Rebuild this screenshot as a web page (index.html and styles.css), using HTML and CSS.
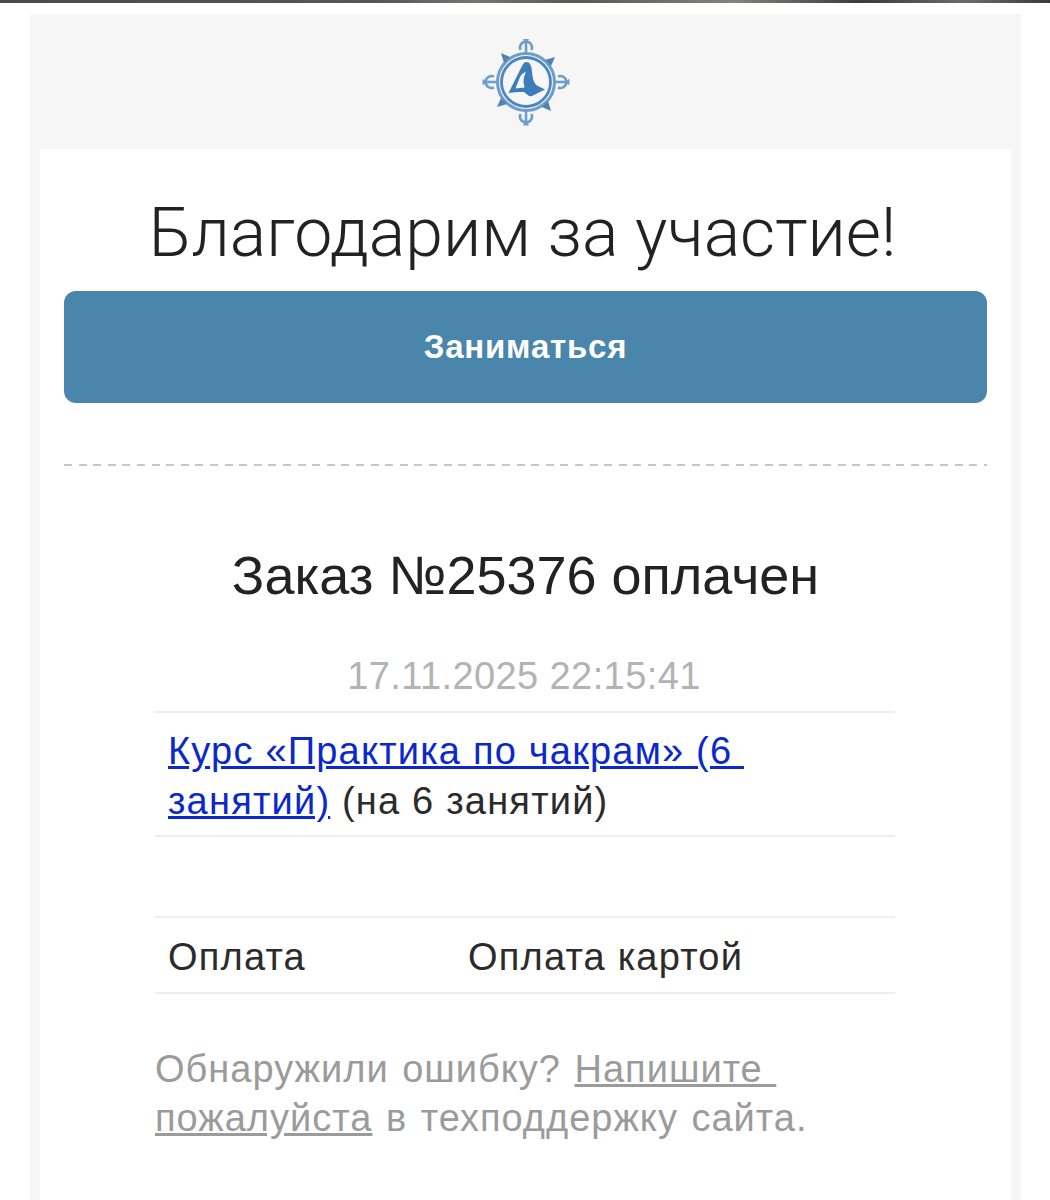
FILE: index.html
```html
<!DOCTYPE html>
<html>
  <head>
    <meta charset="UTF-8">
    <title>Заказ оплачен</title>
    <link rel="stylesheet" href="styles.css">
  </head>
  <body>
    <div class="topstrip"></div>
    <div class="mail">
      <div class="mail-head">
        <svg class="logo" width="94" height="88" viewBox="0 0 94 88">
          <g fill="none" stroke="#6f9dc9" stroke-width="2.600">
            <circle cx="47" cy="43" r="28.500" stroke-width="3"/>
            <circle cx="47" cy="43" r="24.500" stroke="#4a86c0" stroke-width="2.800"/>
            <g id="prong">
              <path d="M47 15V3"/>
              <path d="M41.500 11a6 6 0 1 1 11 0"/>
              <path d="M47 3.500l-2.500-3.500h5z" fill="#6f9dc9" stroke-width="1"/>
            </g>
            <use href="#prong" transform="rotate(90 47 43)"/>
            <use href="#prong" transform="rotate(180 47 43)"/>
            <use href="#prong" transform="rotate(270 47 43)"/>
          </g>
          <g fill="#4f82b2">
            <path id="spike" d="M22 14l3 10 6-6z"/>
            <use href="#spike" transform="rotate(90 47 43)"/>
            <use href="#spike" transform="rotate(180 47 43)"/>
            <use href="#spike" transform="rotate(270 47 43)"/>
          </g>
          <path fill="#3f7dba" fill-rule="evenodd" d="M29.500 54L42.500 28C44 25 45 23 47.500 23C50.500 23 52 26 52.500 29L53.500 37C54.500 42 55.500 45 58 46.500L66 50.500L58 54.500C54.500 56.500 52 57.500 50 57L45 53H39zM41 38L36.500 49.500L45.500 48.500L44.500 43C44.500 39 45.500 36 47 33C44 34 42 35.500 41 38z"/>
        </svg>
      </div>
      <div class="card">
        <h1 class="thanks">Благодарим за участие!</h1>
        <a class="btn" href="#">Заниматься</a>
        <div class="dash"></div>
        <h2 class="order">Заказ №25376 оплачен</h2>
        <div class="date">17.11.2025 22:15:41</div>
        <table class="info">
          <tr>
            <td colspan="2"><a href="#">Курс «Практика по чакрам» (6&nbsp;<wbr>занятий)</a> (на 6 занятий)</td>
          </tr>
          <tr class="empty">
            <td colspan="2"></td>
          </tr>
          <tr class="pay">
            <td class="label">Оплата</td>
            <td>Оплата картой</td>
          </tr>
        </table>
        <p class="note">Обнаружили ошибку? <a href="#">Напишите&nbsp;<wbr>пожалуйста</a> в техподдержку сайта.</p>
      </div>
    </div>
  </body>
</html>
```
FILE: styles.css
```css
* { margin: 0; padding: 0; box-sizing: border-box; }
html, body { height: 1200px; overflow: hidden; }
body { background: #fff; font-family: "Liberation Sans", Arial, sans-serif; color: #2b2b2b; }
.topstrip { height: 3px; background: linear-gradient(90deg, #4a4a50 0, #55555a 36%, #77756f 45%, #5a5855 55%, #85837c 70%, #3c3a3c 82%, #6d6c6a 92%, #3a3a40 100%); }
.mail { width: 991px; height: 1189px; margin: 11px 0 0 30px; background: #f6f6f6; padding: 0 10px; }
.mail-head { height: 135px; display: flex; justify-content: center; padding-top: 25px; }
.logo { display: block; filter: blur(.5px); }
.card { background: #fff; height: 1054px; padding: 0 24px; }
.thanks { font-family: Roboto, "Liberation Sans", sans-serif; font-weight: 300; font-size: 68px; line-height: 84px; text-align: center; color: #222; padding: 42px 6px 0 0; height: 142px; }
.btn { display: flex; align-items: center; justify-content: center; height: 112px; background: #4a85ab; border-radius: 12px; color: #fff; font-size: 33px; font-weight: bold; letter-spacing: .8px; text-decoration: none; }
.dash { margin-top: 61px; height: 2px; background: repeating-linear-gradient(90deg, #c8c8c8 0, #c8c8c8 8px, transparent 8px, transparent 14.6px); }
.order { font-weight: normal; font-size: 54px; line-height: 60px; text-align: center; color: #222; margin-top: 79px; }
.date { font-size: 38px; line-height: 44px; letter-spacing: .4px; text-align: center; color: #b3b3b3; margin-top: 49px; padding-right: 3px; }
.info { width: 740px; margin: 13px 0 0 91px; border-collapse: collapse; border-top: 2px solid #eee; font-size: 38px; line-height: 50px; letter-spacing: 1.2px; }
.info td { padding: 13px 13px 9px; border-bottom: 2px solid #eee; }
.info a { color: #0a28cc; }
.info .empty td { height: 81px; }
.info .pay td { padding: 14px 13px 10px; }
.info .label { width: 300px; }
.note { width: 680px; margin: 51px 0 0 91px; font-size: 38px; line-height: 49px; letter-spacing: 1px; word-spacing: 2px; color: #9b9b9b; }
.note a { color: #9b9b9b; }
```
